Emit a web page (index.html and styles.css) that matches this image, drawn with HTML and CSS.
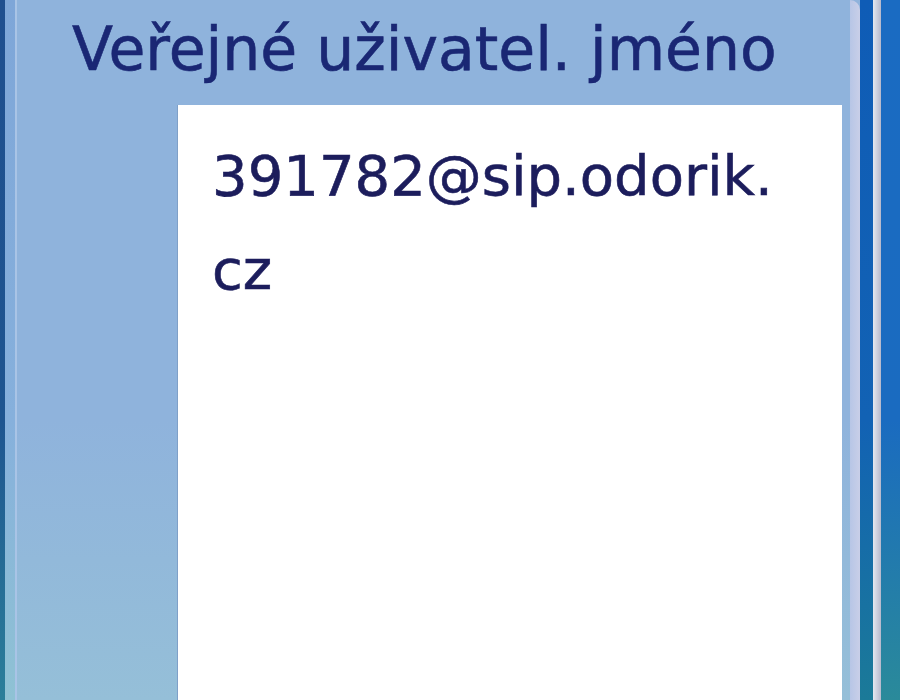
FILE: index.html
```html
<!DOCTYPE html>
<html>
<head>
<meta charset="utf-8">
<link rel="stylesheet" href="styles.css">
</head>
<body>
<div class="screen">
  <div class="edge-dark"></div>
  <div class="edge-light"></div>
  <div class="panel">
    <div class="title">Veřejné uživatel. jméno</div>
    <div class="content">
      <div class="side"></div>
      <div class="box">
        <div class="value">391782@sip.odorik.<br>cz</div>
      </div>
      <div class="side-right"></div>
    </div>
  </div>
  <div class="rim"></div>
  <div class="bar-blue"></div>
  <div class="bar-pale"></div>
  <div class="bar-blue2"></div>
</div>
</body>
</html>
```
FILE: styles.css
```css
html, body {
  margin: 0;
  padding: 0;
  width: 900px;
  height: 700px;
  overflow: hidden;
}
.screen {
  display: flex;
  width: 900px;
  height: 700px;
  background: #8fb3dc;
}
.edge-dark {
  width: 5px;
  background: linear-gradient(#1f4f8f, #1e5590 60%, #2b7f9a);
}
.edge-light {
  width: 10px;
  background: linear-gradient(#7ea6d8, #86b0dc 60%, #8fc2d4);
  border-right: 2px solid #a9c4e6;
}
.panel {
  flex: 1;
  display: flex;
  flex-direction: column;
  background: linear-gradient(#8fb3dc, #8fb3dc 60%, #95bfd8);
  border-top-left-radius: 16px;
}
.title {
  height: 105px;
  box-sizing: border-box;
  padding: 14px 0 0 55px;
  font-family: "DejaVu Sans", "Liberation Sans", sans-serif;
  font-size: 60px;
  line-height: 70px;
  color: #1a2774;
  -webkit-text-stroke: 0.6px #1a2774;
  white-space: nowrap;
}
.content {
  flex: 1;
  display: flex;
}
.side {
  width: 160px;
  border-right: 1px solid #7fa0c8;
}
.box {
  flex: 1;
  background: #ffffff;
  padding: 24px 0 0 34px;
  box-sizing: border-box;
}
.value {
  font-family: "DejaVu Sans", "Liberation Sans", sans-serif;
  font-size: 56px;
  line-height: 94px;
  color: #1c1d5c;
  -webkit-text-stroke: 0.6px #1c1d5c;
}
.side-right {
  width: 8px;
}
.rim {
  width: 10px;
  background: linear-gradient(90deg, #b7c6e6, #c9cfe8);
  border-top-right-radius: 10px;
}
.bar-blue {
  width: 13px;
  background: linear-gradient(#0f5cb6, #1262b4 60%, #1b7a98);
}
.bar-pale {
  width: 8px;
  background: linear-gradient(90deg, #e4e8f0, #b5b8cc);
}
.bar-blue2 {
  width: 19px;
  background: linear-gradient(#1a6bc2, #1a6bc0 60%, #2a8a9a);
}
```
